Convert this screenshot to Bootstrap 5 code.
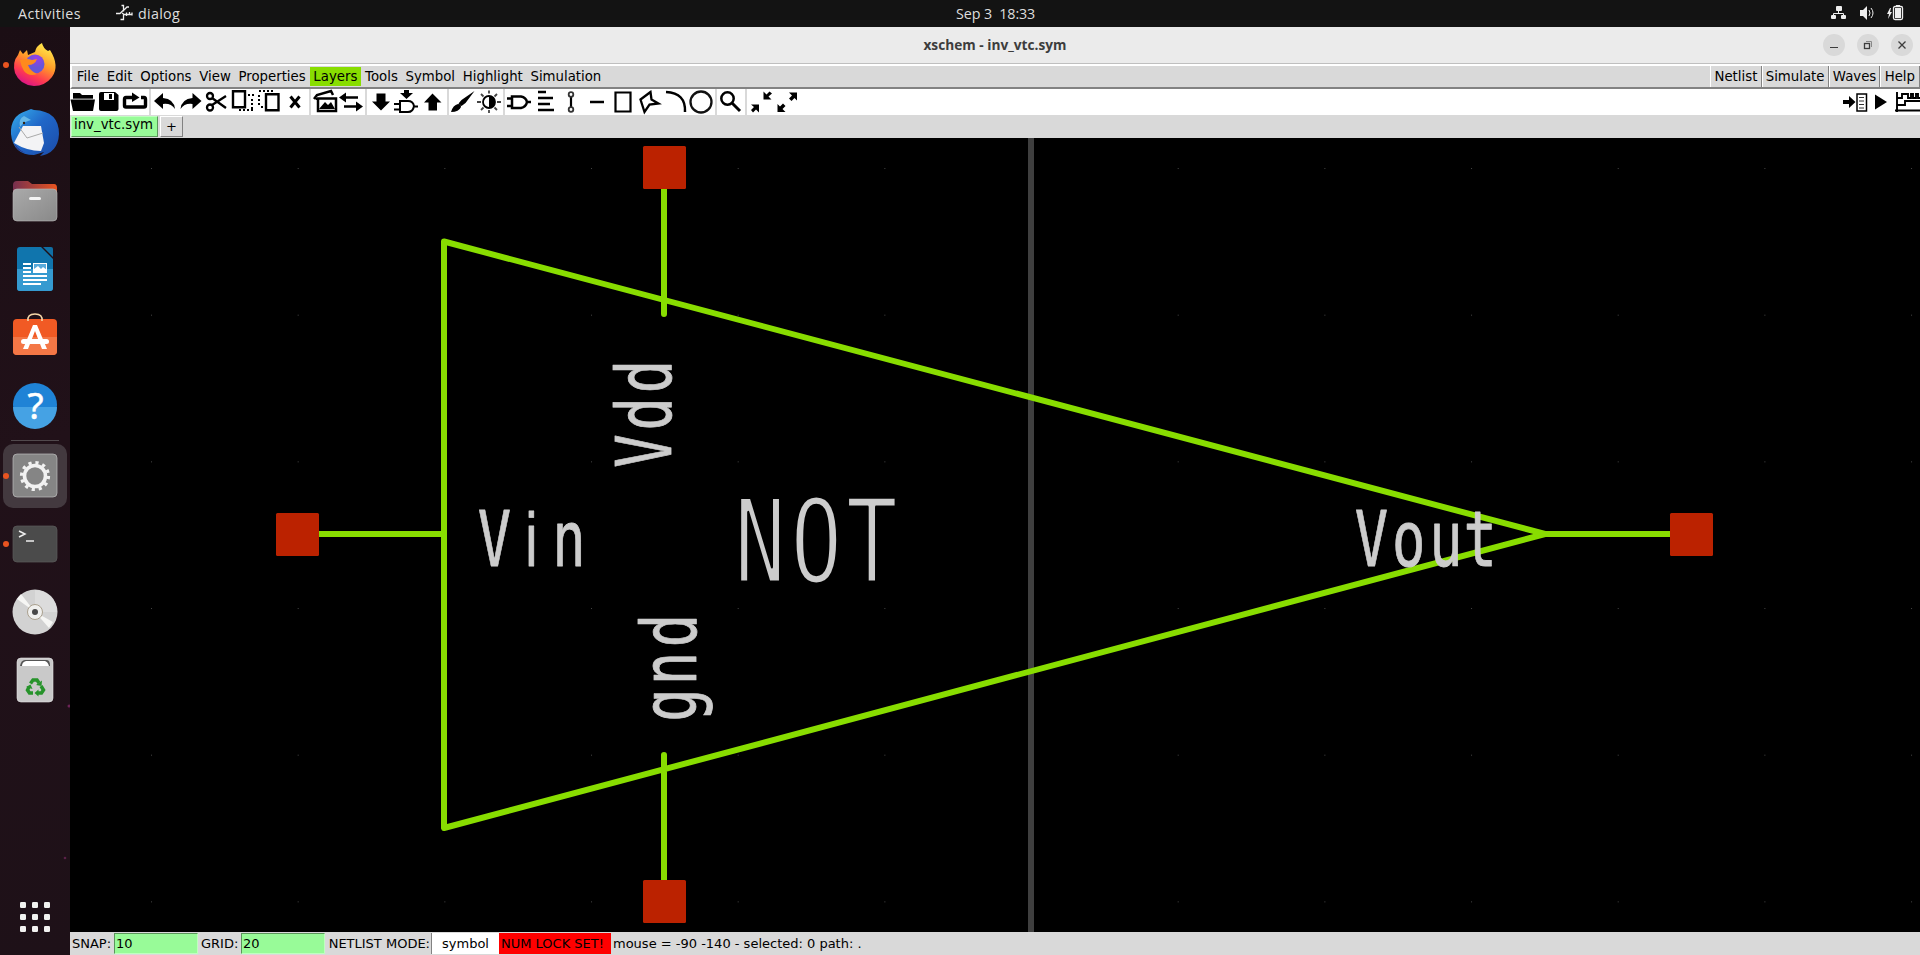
<!DOCTYPE html>
<html lang="en">
<head>
<meta charset="utf-8">
<title>xschem - inv_vtc.sym</title>
<link href="https://cdn.jsdelivr.net/npm/bootstrap@5.3.0/dist/css/bootstrap.min.css" rel="stylesheet">
<style>
body{width:1920px;height:955px;overflow:hidden;background:#1e1118;font-family:"DejaVu Sans",sans-serif;font-size:13px;line-height:16px;color:#000}
svg{display:block;flex:none}
.topbar{height:27px;background:#131313;color:#dedede;font:14.3px/27px "Open Sans",sans-serif}
.clock{left:956px;top:0;white-space:pre;letter-spacing:-.1px}
.dock{width:70px;background:linear-gradient(165deg,#1b0e14,#211119 45%,#1e1118)}
.titlebar{height:37px;background:#ebebeb;border-bottom:1px solid #bfbfbf;color:#3d3d3d;font:bold 13.7px/36px "Open Sans",sans-serif}
.title-text{width:1850px}
.win-btns{right:7px;top:7px;gap:12px}
.menus{height:25px;background:#d9d9d9;border-top:2px solid #fff;border-left:2px solid #fff;border-bottom:2px solid #828282;font-size:13.3px}
.menus span{padding:2px 3.85px 3px;height:19px;margin-top:1px}
.menus span:first-child{margin-left:1px}
.menus .hot{background:#8d0}
.menus .raised{margin-top:0;height:21px;padding:3px 3.2px 2px;border-left:1px solid #fff;border-right:1px solid #828282}
.tools{height:26px;background:#fff}
.tabs-row{height:23px;background:#d9d9d9}
.tab-on{width:87px;height:21px;margin:1px 2px 0 1px;padding:0 2px;background:#98fb98;border:1px solid #bfffbf;border-right-color:#5b965b;border-bottom-color:#5b965b;font-size:13.3px}
.tab-add{width:23px;height:21px;margin-top:1px;padding-top:2px;border:1px solid #fff;border-right-color:#828282;border-bottom-color:#828282}
.status{height:23px;background:#d9d9d9;white-space:nowrap;padding-top:1px}
.status>span{height:21px;padding:3px 2px 0}
.status .field{background:#98fb98;border:1px solid #5b965b;border-right-color:#bfffbf;border-bottom-color:#bfffbf;padding:2px 1px 0;width:84px}
.sheet text{font-family:"DejaVu Sans Mono",monospace;fill:#ccc;stroke:#ccc;stroke-width:.8;stroke-linejoin:round}
.sheet .plain{font-family:"Liberation Sans",sans-serif}
.sheet .big{stroke:#000;stroke-width:3}
</style>
</head>
<body class="d-flex flex-column">
<header class="topbar d-flex position-relative">
  <span style="width:115px;padding-left:18px;letter-spacing:.4px">Activities</span>
  <svg width="23" height="27" viewBox="115 0 23 27" fill="none" stroke="#eee" stroke-width="1.300"><path d="M121.500 5.500h2v6M116 13.500h4l3-3M122 13l1.500 1v5.500h-3M124 10l3-3h2M124 14.500h8M126.500 12.500v3.500M129.500 12v2.500M132 12.500v3"/></svg>
  <span style="letter-spacing:.3px">dialog</span>
  <span class="position-absolute clock">Sep 3  18:33</span>
  <svg class="ms-auto" width="90" height="27" viewBox="1830 0 90 27"><g fill="#eee"><rect x="1836" y="6" width="6" height="5" rx="1"/><rect x="1831" y="15" width="5" height="4" rx="1"/><rect x="1841" y="15" width="5" height="4" rx="1"/><path d="M1860 10h3l4-4v14l-4-4h-3zM1890 8l-3 6h2l-1 5 4-7h-2l1-4z"/><rect x="1895" y="8" width="6" height="10"/></g><g fill="none" stroke="#eee"><path d="M1838.500 11v2.500M1833.500 15v-1.500h10V15M1869 10q2 3 0 6M1871 8q4 5 0 10"/><rect x="1893.500" y="6.500" width="9" height="13" rx="1.500" stroke-width="1.300"/><path d="M1896 5.500h4"/></g></svg>
</header>
<div class="d-flex" style="height:928px">
<aside class="dock d-flex flex-column">
<svg width="70" height="71" viewBox="0 27 70 71"><defs><linearGradient id="fx" x1=".8" y1="0" x2=".3" y2="1"><stop stop-color="#fff44f"/><stop offset=".45" stop-color="#ff9a28"/><stop offset=".75" stop-color="#ff3b50"/><stop offset="1" stop-color="#d9128a"/></linearGradient><radialGradient id="fp" cx=".6" cy=".2"><stop stop-color="#9a3de8"/><stop offset="1" stop-color="#6656d8"/></radialGradient></defs><circle cx="6" cy="65" r="3" fill="#e95420"/><path d="M35 52q1-6 7-9 1 5 6 8l2-1q10 16 2 27-7 9-18 9-14-1-19-13-3-11 3-18l2-5 3 4 4-4 1 5z" fill="url(#fx)"/><circle cx="35" cy="64" r="9.500" fill="url(#fp)"/><path d="M20 60q7-2 12 0l5-1q-2 6-9 6 2 6 9 9-8 3-13-3-3-5-4-11z" fill="#ff8a1d"/></svg>
<svg width="70" height="69" viewBox="0 98 70 69"><defs><linearGradient id="tb" x2="1" y2="1"><stop stop-color="#36b0ec"/><stop offset=".45" stop-color="#2067c8"/><stop offset="1" stop-color="#1b4ba8"/></linearGradient></defs><path d="M11 134q-1-18 15-23l5-2 3 1q25 1 25 24-1 19-19 22l4-4-10 3q-21 0-23-21z" fill="url(#tb)"/><path d="M16 139l7-13 18 0 3 17-3 8q-14 0-27-8z" fill="#f3f3f5"/><path d="M19 127l8 11 16-5" fill="none" stroke="#aaa"/><path d="M20 127q-2-8 4-11l7 4q-8 2-11 7z" fill="#66b8e8"/><circle cx="24" cy="123" r="1.200" fill="#321"/><path d="M14 143q5 8 12 10-9-2-12-10" fill="#321b64"/></svg>
<svg width="70" height="68" viewBox="0 167 70 68"><defs><linearGradient id="fo"><stop stop-color="#75304f"/><stop offset="1" stop-color="#e95420"/></linearGradient><linearGradient id="fg" x2="1" y2="1"><stop stop-color="#aaa"/><stop offset="1" stop-color="#898989"/></linearGradient></defs><path d="M13 205v-20q0-4 4-4h11l4 3h22q3 0 3 4v17z" fill="url(#fo)"/><rect x="13" y="189" width="44" height="32" rx="4" fill="url(#fg)" stroke="#bbb" stroke-width=".6"/><rect x="29" y="197" width="12" height="3" rx="1.500" fill="#f4f4f4"/></svg>
<svg width="70" height="67" viewBox="0 235 70 67"><path d="M20 247h21l12 12v29q0 3-3 3H20q-3 0-3-3v-38q0-3 3-3z" fill="#1075ad"/><path d="M17 269h36v19q0 3-3 3H20q-3 0-3-3z" fill="#359ad0"/><path d="M43 247h8q2 0 2 2v8z" fill="#106fa4"/><path d="M23 264h8M23 268h8M23 272h8M23 276h24M23 280h24M23 284h18" stroke="#fff" stroke-width="2"/><rect x="33.500" y="263.500" width="13" height="9" fill="#57aadb" stroke="#fff"/><path d="M34 272v-3l4-3 3 3 2-2 4 3v2z" fill="#fff"/></svg>
<svg width="70" height="69" viewBox="0 302 70 69"><rect x="13" y="319" width="44" height="36" rx="4" fill="#f15a24"/><path d="M13 337h44v14q0 4-4 4H17q-4 0-4-4z" fill="#f47746"/><path d="M28 321q-1-7 7-7t7 7" fill="none" stroke="#f6d7a8" stroke-width="1.600"/><path d="M33 325h4l10 24h-5L35 331l-7 18h-5z" fill="#fff"/><rect x="21" y="339" width="28" height="5" rx="2.500" fill="#fff"/></svg>
<svg width="70" height="67" viewBox="0 371 70 67"><circle cx="35" cy="405" r="22" fill="#1f83d6"/><path d="M13 407h44a22 22 0 0 1-44 0z" fill="#45a2e4"/><text x="35.500" y="418.500" text-anchor="middle" font-family="Noto Sans" font-size="37" fill="#fff" stroke="#fff" stroke-width=".5">?</text></svg>
<svg width="70" height="72" viewBox="0 438 70 72"><path d="M11 440.500h48" stroke="#51494d"/><rect x="3" y="444" width="64" height="64" rx="10" fill="#43393f"/><circle cx="6" cy="476" r="3" fill="#e95420"/><rect x="13" y="454" width="44" height="43" rx="4" fill="#858585" stroke="#bdbdbd" stroke-width=".7"/><circle cx="35" cy="476" r="13.500" fill="none" stroke="#f2f2f2" stroke-width="3.200" stroke-dasharray="3.200 3.870"/><circle cx="35" cy="476" r="10.500" fill="none" stroke="#f2f2f2" stroke-width="3.600"/></svg>
<svg width="70" height="68" viewBox="0 510 70 68"><circle cx="6" cy="544" r="3" fill="#e95420"/><rect x="13" y="526" width="44" height="36" rx="4" fill="#4b4b4b" stroke="#5c5c5c" stroke-width=".7"/><path d="M19 531l6 3-6 3M26 541h8" fill="none" stroke="#eee" stroke-width="1.500"/></svg>
<svg width="70" height="68" viewBox="0 578 70 68"><circle cx="35" cy="612" r="22.500" fill="#d2d2d2"/><path d="M35 612V590A22 22 0 0 1 57 612z" fill="#dcdcdc"/><path d="M17 599l4-5 14 18 18 10-4 6-14-16z" fill="#f6f6f4"/><circle cx="35" cy="612" r="7.500" fill="#f0f0ee" stroke="#aaa08e"/><circle cx="35" cy="612" r="3" fill="#484848"/></svg>
<svg width="70" height="68" viewBox="0 646 70 68"><rect x="17" y="658" width="36" height="44" rx="4" fill="#c9c9c9" stroke="#e4e4e4" stroke-width=".6"/><path d="M20 666q1-6 5-6h22q3 0 3 6z" fill="#555"/><path d="M22 666q0-4 4-5h19q3 1 4 5z" fill="#fff"/><g fill="none" stroke="#26932a" stroke-width="3.500"><path d="M30.500 683.500l2.500-3.500h4l2 3M41 686l2.500 4-2 3h-3.500M33 693h-3.500l-2-3 1.500-3"/></g><path d="M36 685l5.500 1 .5-5.500zM38.500 689.500v7l-4-3.500zM26 687l4.500-2.500 2 4.500z" fill="#26932a"/><circle cx="69" cy="706" r="1.500" fill="#6b2355"/></svg>
<svg class="mt-auto" width="70" height="110" viewBox="0 845 70 110"><circle cx="65" cy="858" r="1.300" fill="#5a2148"/><g fill="#f2f2f0"><rect x="20" y="902" width="6" height="6" rx="1.300"/><rect x="32" y="902" width="6" height="6" rx="1.300"/><rect x="44" y="902" width="6" height="6" rx="1.300"/><rect x="20" y="914" width="6" height="6" rx="1.300"/><rect x="32" y="914" width="6" height="6" rx="1.300"/><rect x="44" y="914" width="6" height="6" rx="1.300"/><rect x="20" y="926" width="6" height="6" rx="1.300"/><rect x="32" y="926" width="6" height="6" rx="1.300"/><rect x="44" y="926" width="6" height="6" rx="1.300"/></g></svg>
</aside>
<main class="d-flex flex-column" style="width:1850px">
<div class="titlebar position-relative"><div class="title-text text-center">xschem - inv_vtc.sym</div>
<div class="win-btns position-absolute d-flex"><svg width="22" height="22" fill="none" stroke="#3d3d3d"><circle cx="11" cy="11" r="11" fill="#d9d9d9" stroke="none"/><path d="M7 13.500h8"/></svg><svg width="22" height="22" fill="none" stroke="#3d3d3d"><circle cx="11" cy="11" r="11" fill="#d9d9d9" stroke="none"/><rect x="7.500" y="9.500" width="5" height="5" stroke-width="1.300"/><path d="M9 7.500h5.500V13" stroke="#888"/></svg><svg width="22" height="22" fill="none" stroke="#3d3d3d"><circle cx="11" cy="11" r="11" fill="#d9d9d9" stroke="none"/><path d="M7.500 7.500l7 7M14.500 7.500l-7 7" stroke-width="1.300"/></svg></div></div>
<nav class="menus d-flex"><span>File</span><span>Edit</span><span>Options</span><span>View</span><span>Properties</span><span class="hot">Layers</span><span>Tools</span><span>Symbol</span><span>Highlight</span><span>Simulation</span><span class="raised ms-auto">Netlist</span><span class="raised">Simulate</span><span class="raised">Waves</span><span class="raised pe-1">Help</span></nav>
<div class="tools d-flex">
<svg width="27" height="26" viewBox="70 89 27 26"><path d="M73 98v-5h7l2 2h11v4H73zM70.500 99.500H95l-2 11.500H73z"/><path d="M73 98.700h20" stroke="#999" stroke-width=".7"/></svg>
<svg width="24" height="26" viewBox="97 89 24 26"><path fill-rule="evenodd" d="M101 92h14l3.500 3v14q0 2-2 2H101q-2 0-2-2V94q0-2 2-2zM104 93v7h10v-7zM109 94h3v5h-3z"/></svg>
<svg width="30" height="26" viewBox="121 89 30 26"><path d="M133 97.500h-7q-1.500 0-1.500 2V105.500q0 1.500 1.500 1.500h18q1.500 0 1.500-1.500v-6q0-2-1.500-2h-3" fill="none" stroke="#000" stroke-width="3.400"/><path d="M132 92.500l7.500 5-7.500 4.500z"/><path fill="#d9d9d9" d="M149 89h2v26h-2z"/></svg>
<svg width="27" height="26" viewBox="151 89 27 26"><path d="M154 101l9-8v5q11 1 12 11-4-6-12-5v5z"/></svg>
<svg width="26" height="26" viewBox="178 89 26 26"><path d="M201.500 101l-9-8v5q-11 1-12 11 4-6 12-5v5z"/></svg>
<svg width="25" height="26" viewBox="204 89 25 26" fill="none" stroke="#000" stroke-width="2.300"><circle cx="210" cy="96" r="3"/><circle cx="210" cy="107.500" r="3"/><path d="M212 98l14 10M212 105l14-9"/></svg>
<svg width="27" height="26" viewBox="229 89 27 26" fill="none" stroke="#000" stroke-width="2.400"><path d="M233 91.200h12v16h-12z"/><path stroke-width="2" stroke-dasharray="2 2" d="M248 95h6M252 99v12M239 110h14"/></svg>
<svg width="28" height="26" viewBox="256 89 28 26" fill="none" stroke="#000" stroke-width="2.400"><path d="M266 94.200h12.500v16H266z"/><path stroke-width="2" stroke-dasharray="2 2" d="M259 91h14M259 95v12M261 107h4"/></svg>
<svg width="27" height="26" viewBox="284 89 27 26"><path d="M290.500 96.500l9 11M299.500 96.500l-9 11" stroke="#000" stroke-width="3"/><path fill="#d9d9d9" d="M309 89h2v26h-2z"/></svg>
<svg width="27" height="26" viewBox="311 89 27 26"><path d="M314 99l3-4 14-4 2 4M317 100v-2" fill="none" stroke="#000" stroke-width="2.500"/><path d="M318 98.500h18v12.500h-18z" fill="none" stroke="#000" stroke-width="2.500"/><path d="M319 109l6-7 3 3 3-3 4 7z"/></svg>
<svg width="29" height="26" viewBox="338 89 29 26"><path d="M344 97.500h14M344 106.500h14" stroke="#000" stroke-width="2.600"/><path d="M339 97.500l7-5v10zM363 106.500l-7-5v10z"/><path fill="#d9d9d9" d="M365 89h2v26h-2z"/></svg>
<svg width="25" height="26" viewBox="367 89 25 26"><path d="M376.500 93.500h9v8h4.500l-9 9-9-9h4.500z"/></svg>
<svg width="30" height="26" viewBox="392 89 30 26"><path d="M404 90h5v3h4l-6.500 6-6.500-6h4z"/><path d="M400 101h8q5 0 6 5-1 6-6 6h-8zM394 104h6M394 109.500h6M414 106.500h4" fill="none" stroke="#000" stroke-width="2"/></svg>
<svg width="27" height="26" viewBox="422 89 27 26"><path d="M428.500 110.500h8.500v-8h4.500l-9-9-8.500 9h4.500z"/><path fill="#d9d9d9" d="M447 89h2v26h-2z"/></svg>
<svg width="27" height="26" viewBox="449 89 27 26"><path d="M474.500 91l-13 9-3 3.500 3 2.500 4-3zM458 104q3 0 3 3-2 5-10 5 2-7 7-8z"/></svg>
<svg width="29" height="26" viewBox="476 89 29 26"><circle cx="489" cy="102" r="6" fill="none" stroke="#000" stroke-width="1.800"/><path d="M489 96a6 6 0 0 1 0 12z"/><path d="M489 90.500v3M489 110v3M477 102h4M497 102h4M481 94l2.500 2.500M497 94l-2.500 2.500M481 110l2.500-2.500M497 110l-2.500-2.500" stroke="#444" stroke-width="1.800"/><path fill="#d9d9d9" d="M503 89h2v26h-2z"/></svg>
<svg width="28" height="26" viewBox="505 89 28 26"><path d="M512 96.500h9q5 1 6 5.500-1 5-6 6h-9zM507 98.500h5M507 106h5M527 102h4" fill="none" stroke="#000" stroke-width="2.500"/></svg>
<svg width="26" height="26" viewBox="533 89 26 26"><path d="M538 92h8M538 98h15M538 104h12M538 110h16" stroke="#000" stroke-width="2.500"/></svg>
<svg width="24" height="26" viewBox="559 89 24 26" fill="none" stroke="#333" stroke-width="1.800"><path d="M571 97v10" stroke="#000" stroke-width="2.200"/><circle cx="571" cy="94.500" r="2.300"/><circle cx="571" cy="109.500" r="2.300"/></svg>
<svg width="27" height="26" viewBox="583 89 27 26"><path d="M590 102h14" stroke="#000" stroke-width="2.500"/></svg>
<svg width="25" height="26" viewBox="610 89 25 26"><path d="M615.500 92.500h15v19h-15z" fill="none" stroke="#000" stroke-width="2.200"/></svg>
<svg width="27" height="26" viewBox="635 89 27 26"><path d="M650.500 92l-10 7.500 4 12.500 5-7.500 9-1-7-4z" fill="none" stroke="#000" stroke-width="2.300"/></svg>
<svg width="26" height="26" viewBox="662 89 26 26"><path d="M666 92q20 1 19 20" fill="none" stroke="#000" stroke-width="2.500"/></svg>
<svg width="29" height="26" viewBox="688 89 29 26"><circle cx="701" cy="102" r="10.500" fill="none" stroke="#111" stroke-width="2.300"/><path fill="#d9d9d9" d="M715 89h2v26h-2z"/></svg>
<svg width="30" height="26" viewBox="717 89 30 26"><circle cx="727.500" cy="98.500" r="6.200" fill="none" stroke="#000" stroke-width="2.500"/><path d="M732 103l8 8" stroke="#000" stroke-width="3"/><path fill="#d9d9d9" d="M745 89h2v26h-2z"/></svg>
<svg width="28" height="26" viewBox="747 89 28 26"><path d="M763.500 91.500v8h8l-3-3 3.500-3-2.500-2-3 3zM751 104.500h8v8l-3-3-3 3-2-2.500 3-3z"/></svg>
<svg width="28" height="26" viewBox="775 89 28 26"><path d="M797 92.500h-8l3 3-3 3 2.500 2.500 3-3 2.500 2.500zM777.500 112h8l-3-3 3-3-2.500-2.500-3 3-2.500-2.500z"/></svg>
<svg class="ms-auto" width="29" height="26" viewBox="1841 89 29 26"><path d="M1843 100h6v-4l6.500 6-6.500 6v-4h-6z"/><path d="M1857 94h9.500v17H1857z" fill="none" stroke="#000" stroke-width="1.500"/><path d="M1859 97.500h5M1859 101h5M1859 104.500h5M1859 108h5" stroke="#333"/></svg>
<svg width="22" height="26" viewBox="1870 89 22 26"><path d="M1875 94.500l12 7.500-12 7.500z"/></svg>
<svg width="28" height="26" viewBox="1892 89 28 26"><path d="M1897 92v20M1895 110.500h25M1897 98h5v-4h6v4h3v-4h2v4h3v-4h2v4h2M1897 105h8v-4h15" fill="none" stroke="#000" stroke-width="1.900"/></svg>
</div>
<div class="tabs-row d-flex"><span class="tab-on">inv_vtc.sym</span><span class="tab-add text-center">+</span></div>
<svg class="sheet" width="1850" height="794" viewBox="70 138 1850 794">
<defs><pattern id="dots" patternUnits="userSpaceOnUse" x="151" y="168" width="146.670" height="146.670"><rect width="1" height="1" fill="#444"/></pattern></defs>
<rect x="70" y="138" width="1850" height="794"/><rect x="70" y="138" width="1850" height="794" fill="url(#dots)"/>
<path d="M1031 138v794" stroke="#3f3f3f" stroke-width="6"/>
<path d="M444 241.500L1545 534 444 828zM319 534h125M1545 534h125M664 189v125M664 755v125" fill="none" stroke="#8d0" stroke-width="6" stroke-linecap="round" stroke-linejoin="round"/>
<g fill="#b20"><rect x="276" y="513" width="43" height="43" rx="1.500"/><rect x="1670" y="513" width="43" height="43" rx="1.500"/><rect x="643" y="146" width="43" height="43" rx="1.500"/><rect x="643" y="880" width="43" height="43" rx="1.500"/></g>
<g font-size="76" text-anchor="middle">
<text transform="translate(494.500 565.500) scale(.73 1)" x="0 50.500 102">V<tspan class="plain">i</tspan>n</text>
<text transform="translate(1371.500 565.500) scale(.73 1)" x="0 51 102 149">Vout</text>
<text transform="translate(670.500 451) rotate(-90) scale(.73 1)" x="0 51 102">Vdd</text>
<text transform="translate(695.500 705) rotate(-90) scale(.73 1)" x="0 50 102">gnd</text>
<text class="big" font-size="116" transform="translate(760 582) scale(.74 1)" x="0 76 151">NOT</text>
</g>
</svg>
<footer class="status d-flex align-items-start"><span style="width:44px">SNAP:</span><span class="field">10</span><span style="width:43px;padding-left:3px">GRID:</span><span class="field">20</span><span class="text-end" style="width:106px;padding-right:1px">NETLIST MODE:</span><span class="bg-white text-center" style="width:68px;border-left:1px solid #828282">symbol</span><span style="width:112px;background:red">NUM LOCK SET!</span><span>mouse = -90 -140 - selected: 0 path: .</span></footer>
</main>
</div>
<script src="https://cdn.jsdelivr.net/npm/bootstrap@5.3.0/dist/js/bootstrap.bundle.min.js"></script>
</body>
</html>
